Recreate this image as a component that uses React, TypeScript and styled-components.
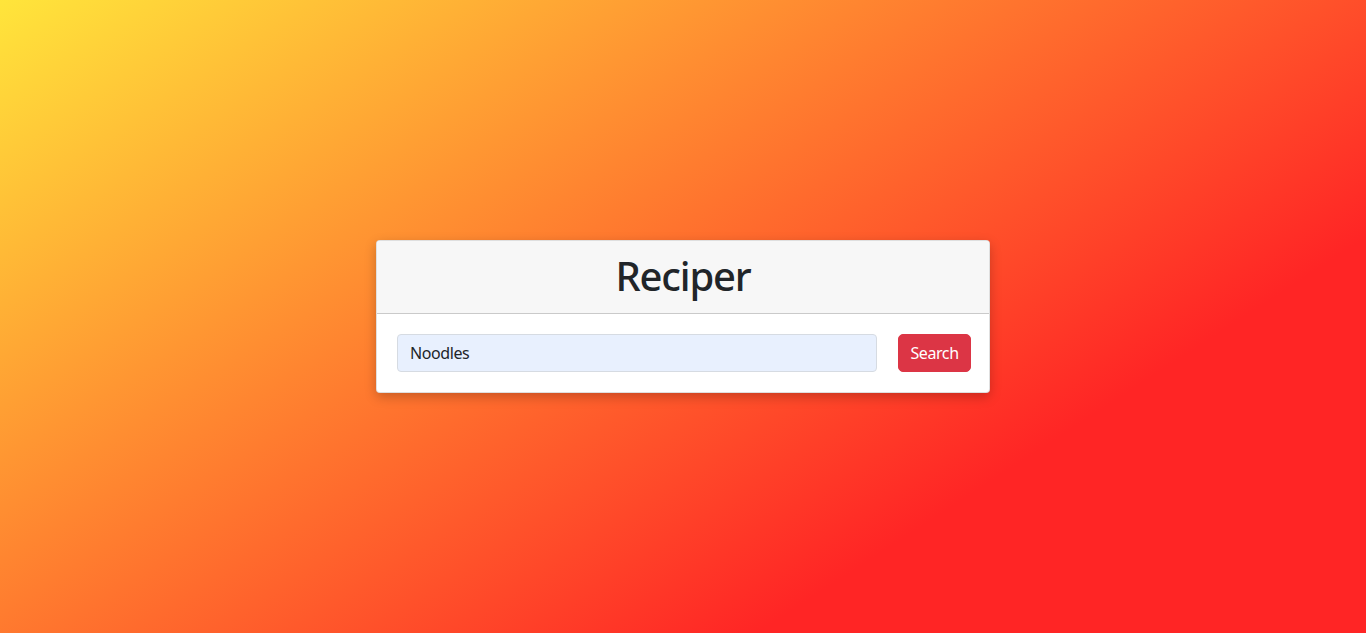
import { useState } from "react";
import styled, { createGlobalStyle } from "styled-components";

const GlobalStyle = createGlobalStyle`
  html, body, #root {
    height: 100%;
  }
  body {
    margin: 0;
    font-family: "Noto Sans", "Segoe UI", Roboto, sans-serif;
    color: #212529;
  }
  * {
    box-sizing: border-box;
  }
`;

const Page = styled.main`
  min-height: 100%;
  display: flex;
  align-items: center;
  justify-content: center;
  background-color: #ffe53b;
  background-image: linear-gradient(147deg, #ffe53b 0%, #ff2525 74%);
`;

const Card = styled.section`
  width: 614px;
  background: #fff;
  border: 1px solid rgba(0, 0, 0, 0.125);
  border-radius: 4px;
  box-shadow: 0 4px 12px rgba(0, 0, 0, 0.22);
  overflow: hidden;
`;

const CardHeader = styled.header`
  padding: 12px 20px;
  background: #f7f7f7;
  border-bottom: 1px solid rgba(0, 0, 0, 0.18);
  text-align: center;
`;

const Title = styled.h1`
  margin: 0;
  font-size: 40px;
  line-height: 46px;
  padding-bottom: 2px;
  font-weight: 500;
  letter-spacing: -1.2px;
`;

const SearchForm = styled.form`
  display: flex;
  align-items: center;
  gap: 21px;
  padding: 20px 18px 20px 20px;
`;

const SearchInput = styled.input`
  flex: 1;
  height: 38px;
  padding: 6px 12px;
  font: inherit;
  font-size: 16px;
  letter-spacing: -0.4px;
  color: #212529;
  background: #e8f0fe;
  border: 1px solid #d6dbe2;
  border-radius: 4px;
  outline: none;
`;

const SearchButton = styled.button`
  width: 73px;
  height: 38px;
  padding: 6px 0;
  font: inherit;
  font-size: 16px;
  letter-spacing: -0.4px;
  color: #fff;
  background: #dc3545;
  border: 1px solid #dc3545;
  border-radius: 5px;
  cursor: pointer;
`;

const App = () => {
  const [query, setQuery] = useState("Noodles");

  return (
    <>
      <GlobalStyle />
      <Page>
        <Card>
          <CardHeader>
            <Title>Reciper</Title>
          </CardHeader>
          <SearchForm onSubmit={(e) => e.preventDefault()}>
            <SearchInput
              type="text"
              value={query}
              onChange={(e) => setQuery(e.target.value)}
            />
            <SearchButton type="submit">Search</SearchButton>
          </SearchForm>
        </Card>
      </Page>
    </>
  );
};

export default App;
